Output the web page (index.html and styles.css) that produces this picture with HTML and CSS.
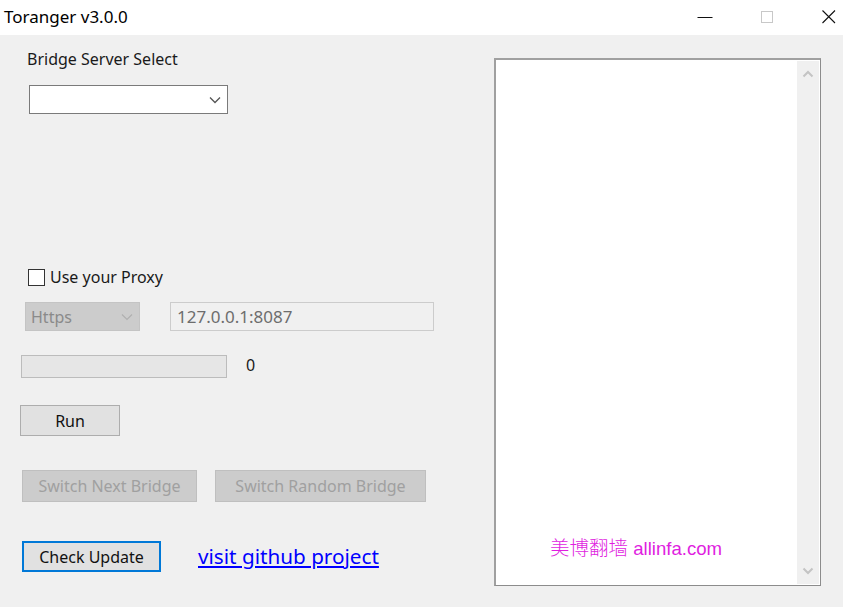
FILE: index.html
```html
<!DOCTYPE html>
<html>
<head>
<meta charset="utf-8">
<link rel="stylesheet" href="styles.css">
</head>
<body>
<div class="window">
  <div class="titlebar">
    <div class="title">Toranger v3.0.0</div>
    <div class="controls">
      <span class="ctl"><svg width="16" height="16" viewBox="0 0 16 16"><path d="M0.5 8.5H15.5" stroke="#111" stroke-width="1"/></svg></span>
      <span class="ctl"><svg width="16" height="16" viewBox="0 0 16 16"><rect x="2.5" y="2.5" width="11" height="11" fill="none" stroke="#c8c8c8" stroke-width="1"/></svg></span>
      <span class="ctl"><svg width="16" height="16" viewBox="0 0 16 16"><path d="M1.5 1.5L14 14M14 1.5L1.5 14" stroke="#111" stroke-width="1.1"/></svg></span>
    </div>
  </div>
  <div class="main">
    <div class="left">
      <div class="label">Bridge Server Select</div>
      <div class="select">
        <svg class="chev" width="12" height="8" viewBox="0 0 12 8"><path d="M1 1.5L6 6.5L11 1.5" fill="none" stroke="#555" stroke-width="1.3"/></svg>
      </div>
      <div class="check-row">
        <span class="checkbox"></span>
        <span class="check-label">Use your Proxy</span>
      </div>
      <div class="proxy-row">
        <div class="combo-dis">
          <span>Https</span>
          <svg width="12" height="8" viewBox="0 0 12 8"><path d="M1 1.5L6 6.5L11 1.5" fill="none" stroke="#b0b0b0" stroke-width="1.2"/></svg>
        </div>
        <div class="text-dis">127.0.0.1:8087</div>
      </div>
      <div class="progress-row">
        <div class="progress"></div>
        <span class="count">0</span>
      </div>
      <div class="btn run">Run</div>
      <div class="switch-row">
        <div class="btn dis next">Switch Next Bridge</div>
        <div class="btn dis random">Switch Random Bridge</div>
      </div>
      <div class="bottom-row">
        <div class="btn focus">Check Update</div>
        <a class="link" href="#">visit github project</a>
      </div>
    </div>
    <div class="logbox">
      <div class="logarea">
        <div class="watermark"><span class="cjk">美博翻墙</span> allinfa.com</div>
      </div>
      <div class="scroll">
        <svg width="12" height="8" viewBox="0 0 12 8"><path d="M1.5 6.5L6 2L10.5 6.5" fill="none" stroke="#c4c4c4" stroke-width="2"/></svg>
        <svg width="12" height="8" viewBox="0 0 12 8"><path d="M1.5 1.5L6 6L10.5 1.5" fill="none" stroke="#c4c4c4" stroke-width="2"/></svg>
      </div>
    </div>
  </div>
</div>
</body>
</html>
```

FILE: styles.css
```css
html, body {
  margin: 0;
  padding: 0;
}
body {
  width: 843px;
  height: 607px;
  overflow: hidden;
  font-family: "Noto Sans", "Open Sans", sans-serif;
  color: #1a1a1a;
}
.window {
  width: 843px;
  height: 607px;
  display: flex;
  flex-direction: column;
}
.titlebar {
  height: 35px;
  background: #ffffff;
  display: flex;
  align-items: center;
  justify-content: space-between;
}
.title {
  font-size: 17px;
  padding-left: 4px;
  margin-top: -2px;
  color: #000;
}
.controls {
  display: flex;
  align-items: center;
  gap: 34px;
  margin-top: -2px;
}
.ctl {
  width: 28px;
  height: 30px;
  display: flex;
  align-items: center;
  justify-content: center;
}
.main {
  flex: 1;
  background: #f0f0f0;
  display: flex;
}
.left {
  width: 494px;
  display: flex;
  flex-direction: column;
  align-items: flex-start;
}
.label {
  margin-top: 14px;
  margin-left: 27px;
  font-size: 16px;
  line-height: 20px;
  color: #1a1a1a;
}
.select {
  margin-top: 16px;
  margin-left: 29px;
  width: 199px;
  height: 29px;
  box-sizing: border-box;
  background: #fff;
  border: 1px solid #7a7a7a;
  display: flex;
  align-items: center;
  justify-content: flex-end;
  padding-right: 6px;
}
.check-row {
  margin-top: 155px;
  margin-left: 28px;
  display: flex;
  align-items: center;
  height: 17px;
}
.checkbox {
  width: 17px;
  height: 17px;
  box-sizing: border-box;
  border: 1px solid #333;
  background: #fff;
}
.check-label {
  margin-left: 5px;
  font-size: 16px;
  line-height: 17px;
}
.proxy-row {
  margin-top: 16px;
  margin-left: 25px;
  display: flex;
  align-items: center;
}
.combo-dis {
  width: 115px;
  height: 29px;
  box-sizing: border-box;
  background: #cccccc;
  border: 1px solid #c4c4c4;
  display: flex;
  align-items: center;
  justify-content: space-between;
  padding: 0 6px 0 5px;
  color: #8a8a8a;
  font-size: 16px;
}
.text-dis {
  margin-left: 30px;
  width: 264px;
  height: 29px;
  box-sizing: border-box;
  background: #f0f0f0;
  border: 1px solid #cccccc;
  display: flex;
  align-items: center;
  padding-left: 6px;
  color: #6d6d6d;
  font-size: 17px;
}
.progress-row {
  margin-top: 24px;
  margin-left: 21px;
  display: flex;
  align-items: center;
}
.progress {
  width: 206px;
  height: 23px;
  box-sizing: border-box;
  background: #e6e6e6;
  border: 1px solid #bcbcbc;
}
.count {
  margin-left: 19px;
  font-size: 16px;
  margin-top: -4px;
}
.btn {
  box-sizing: border-box;
  display: flex;
  align-items: center;
  justify-content: center;
  font-size: 16px;
  background: #e1e1e1;
  border: 1px solid #adadad;
  color: #111;
}
.run {
  margin-top: 27px;
  margin-left: 20px;
  width: 100px;
  height: 31px;
}
.switch-row {
  margin-top: 34px;
  margin-left: 22px;
  display: flex;
  gap: 18px;
}
.btn.dis {
  background: #cccccc;
  border: 1px solid #bfbfbf;
  color: #a0a0a0;
  height: 32px;
}
.next { width: 175px; }
.random { width: 211px; }
.bottom-row {
  margin-top: 39px;
  margin-left: 22px;
  display: flex;
  align-items: center;
}
.btn.focus {
  width: 139px;
  height: 31px;
  border: 2px solid #0078d7;
}
.link {
  margin-left: 37px;
  font-size: 20.7px;
  color: #0000ff;
  text-decoration: underline;
  margin-top: -2px;
}
.logbox {
  margin-top: 23px;
  width: 327px;
  height: 528px;
  box-sizing: border-box;
  border: 2px solid #a0a0a0;
  border-right-width: 1px;
  border-bottom-width: 1px;
  border-right-color: #8c8c8c;
  border-bottom-color: #8c8c8c;
  background: #fff;
  display: flex;
}
.logarea {
  flex: 1;
  display: flex;
  align-items: flex-end;
  padding-left: 54px;
  padding-bottom: 24px;
}
.watermark {
  font-family: "Liberation Sans", "Noto Sans CJK SC", sans-serif;
  font-size: 18.6px;
  color: #e01ee0;
}
.cjk {
  font-family: "Noto Sans CJK SC", sans-serif;
  font-size: 19.5px;
  font-weight: 300;
}
.scroll {
  width: 22px;
  margin: 1px 1px 1px 0;
  background: #f0f0f0;
  display: flex;
  flex-direction: column;
  justify-content: space-between;
  align-items: center;
  padding: 9px 0 9px 0;
}
```
